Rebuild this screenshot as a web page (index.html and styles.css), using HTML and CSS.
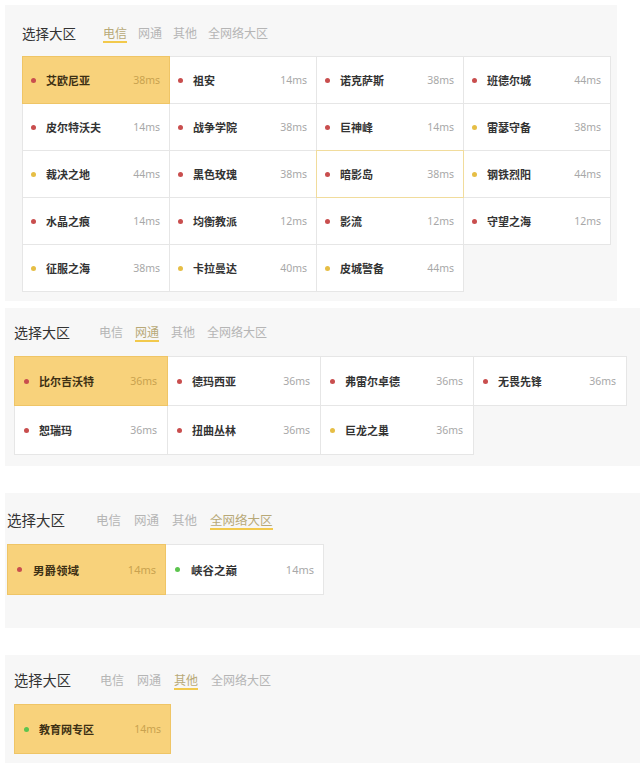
FILE: index.html
```html
<!DOCTYPE html>
<html lang="zh-CN">
<head>
<meta charset="utf-8">
<title>选择大区</title>
<link rel="stylesheet" href="styles.css">
</head>
<body>

<section class="panel p1">
  <div class="head">
    <span class="title">选择大区</span>
    <nav class="tabs">
      <span class="tab active">电信</span>
      <span class="tab">网通</span>
      <span class="tab">其他</span>
      <span class="tab">全网络大区</span>
    </nav>
  </div>
  <div class="grid">
    <div class="cell active"><i class="dot red"></i><span class="name">艾欧尼亚</span><span class="ms">38ms</span></div>
    <div class="cell"><i class="dot red"></i><span class="name">祖安</span><span class="ms">14ms</span></div>
    <div class="cell"><i class="dot red"></i><span class="name">诺克萨斯</span><span class="ms">38ms</span></div>
    <div class="cell"><i class="dot red"></i><span class="name">班德尔城</span><span class="ms">44ms</span></div>
    <div class="cell"><i class="dot red"></i><span class="name">皮尔特沃夫</span><span class="ms">14ms</span></div>
    <div class="cell"><i class="dot red"></i><span class="name">战争学院</span><span class="ms">38ms</span></div>
    <div class="cell"><i class="dot red"></i><span class="name">巨神峰</span><span class="ms">14ms</span></div>
    <div class="cell"><i class="dot yellow"></i><span class="name">雷瑟守备</span><span class="ms">38ms</span></div>
    <div class="cell"><i class="dot yellow"></i><span class="name">裁决之地</span><span class="ms">44ms</span></div>
    <div class="cell"><i class="dot red"></i><span class="name">黑色玫瑰</span><span class="ms">38ms</span></div>
    <div class="cell hover"><i class="dot red"></i><span class="name">暗影岛</span><span class="ms">38ms</span></div>
    <div class="cell"><i class="dot yellow"></i><span class="name">钢铁烈阳</span><span class="ms">44ms</span></div>
    <div class="cell"><i class="dot red"></i><span class="name">水晶之痕</span><span class="ms">14ms</span></div>
    <div class="cell"><i class="dot red"></i><span class="name">均衡教派</span><span class="ms">12ms</span></div>
    <div class="cell"><i class="dot red"></i><span class="name">影流</span><span class="ms">12ms</span></div>
    <div class="cell"><i class="dot red"></i><span class="name">守望之海</span><span class="ms">12ms</span></div>
    <div class="cell"><i class="dot yellow"></i><span class="name">征服之海</span><span class="ms">38ms</span></div>
    <div class="cell"><i class="dot yellow"></i><span class="name">卡拉曼达</span><span class="ms">40ms</span></div>
    <div class="cell"><i class="dot yellow"></i><span class="name">皮城警备</span><span class="ms">44ms</span></div>
  </div>
</section>

<section class="panel p2">
  <div class="head">
    <span class="title">选择大区</span>
    <nav class="tabs">
      <span class="tab">电信</span>
      <span class="tab active">网通</span>
      <span class="tab">其他</span>
      <span class="tab">全网络大区</span>
    </nav>
  </div>
  <div class="grid">
    <div class="cell active"><i class="dot red"></i><span class="name">比尔吉沃特</span><span class="ms">36ms</span></div>
    <div class="cell"><i class="dot red"></i><span class="name">德玛西亚</span><span class="ms">36ms</span></div>
    <div class="cell"><i class="dot red"></i><span class="name">弗雷尔卓德</span><span class="ms">36ms</span></div>
    <div class="cell"><i class="dot red"></i><span class="name">无畏先锋</span><span class="ms">36ms</span></div>
    <div class="cell"><i class="dot red"></i><span class="name">恕瑞玛</span><span class="ms">36ms</span></div>
    <div class="cell"><i class="dot red"></i><span class="name">扭曲丛林</span><span class="ms">36ms</span></div>
    <div class="cell"><i class="dot yellow"></i><span class="name">巨龙之巢</span><span class="ms">36ms</span></div>
  </div>
</section>

<section class="panel p3">
  <div class="head">
    <span class="title">选择大区</span>
    <nav class="tabs">
      <span class="tab">电信</span>
      <span class="tab">网通</span>
      <span class="tab">其他</span>
      <span class="tab active">全网络大区</span>
    </nav>
  </div>
  <div class="grid">
    <div class="cell active"><i class="dot red"></i><span class="name">男爵领域</span><span class="ms">14ms</span></div>
    <div class="cell"><i class="dot green"></i><span class="name">峡谷之巅</span><span class="ms">14ms</span></div>
  </div>
</section>

<section class="panel p4">
  <div class="head">
    <span class="title">选择大区</span>
    <nav class="tabs">
      <span class="tab">电信</span>
      <span class="tab">网通</span>
      <span class="tab active">其他</span>
      <span class="tab">全网络大区</span>
    </nav>
  </div>
  <div class="grid">
    <div class="cell active"><i class="dot green"></i><span class="name">教育网专区</span><span class="ms">14ms</span></div>
  </div>
</section>

</body>
</html>
```

FILE: styles.css
```css
html, body {
  margin: 0;
  padding: 0;
  background: #ffffff;
}
body {
  width: 640px;
  height: 763px;
  overflow: hidden;
  font-family: "Noto Sans", "Noto Sans CJK SC", sans-serif;
  color: #333;
}

.panel {
  background: #f7f7f7;
  box-sizing: border-box;
  margin-left: 5px;
}

.head {
  display: flex;
  align-items: center;
  height: 20px;
}
.title {
  font-family: "Noto Sans CJK SC", sans-serif;
  font-size: 14px;
  line-height: 20px;
  color: #333;
}
.tabs {
  display: flex;
  gap: 12px;
  margin-left: 29px;
}
.tab {
  display: block;
  font-family: "Noto Sans CJK SC", sans-serif;
  font-size: 12px;
  line-height: 14px;
  padding: 3px 0 1px;
  border-bottom: 2px solid transparent;
  color: #b5b5b5;
}
.tab.active {
  color: #b8a978;
  border-bottom-color: #f2c94c;
}

.grid {
  display: grid;
  margin-top: 13px;
}

.cell {
  display: flex;
  align-items: center;
  background: #ffffff;
  border: 1px solid #e6e6e6;
  margin: 0 -1px -1px 0;
  padding: 0 9px 0 8px;
}
.cell.active {
  background: #f8d27b;
  border-color: #efc566;
  position: relative;
  z-index: 2;
}
.cell.hover {
  border-color: #f1dc9c;
  position: relative;
  z-index: 1;
}

.dot {
  display: block;
  width: 5px;
  height: 5px;
  border-radius: 50%;
  flex: none;
}
.dot.red { background: #c94e4e; }
.dot.yellow { background: #e6be45; }
.dot.green { background: #5cc44e; }

.name {
  font-family: "Noto Sans CJK SC", sans-serif;
  font-size: 11px;
  font-weight: 700;
  color: #333;
  margin-left: 10px;
  flex: 1;
}
.cell.active .name { color: #3d3014; }

.ms {
  font-family: "Noto Sans", sans-serif;
  font-size: 10.5px;
  color: #a8a8a8;
}
.cell.active .ms { color: #c9a24f; }

/* panel 1 */
.p1 {
  margin-top: 5px;
  width: 612px;
  padding: 18px 0 10px 17px;
}
.p1 .title { font-size: 13.5px; }
.p1 .tabs { margin-left: 27px; gap: 11px; }
.p1 .grid {
  grid-template-columns: repeat(4, 147px);
  grid-auto-rows: 47px;
}

/* panel 2 */
.p2 {
  margin-top: 7px;
  width: 635px;
  padding: 14px 0 12px 9px;
}
.p2 .grid {
  margin-top: 14px;
  grid-template-columns: repeat(4, 153px);
  grid-auto-rows: 49px;
}
.p2 .cell { padding: 0 10px 0 9px; }

/* panel 3 */
.p3 {
  margin-top: 27px;
  width: 635px;
  padding: 17px 0 34px 2px;
}
.p3 .title { font-size: 14.5px; }
.p3 .tabs { margin-left: 31px; gap: 13px; }
.p3 .tab { font-size: 12.5px; }
.p3 .grid {
  margin-top: 14px;
  grid-template-columns: repeat(4, 158px);
  grid-auto-rows: 50px;
}
.p3 .cell { padding: 0 9px 0 9px; }
.p3 .name { font-size: 11.5px; margin-left: 11px; }
.p3 .ms { font-size: 11px; }

/* panel 4 */
.p4 {
  margin-top: 27px;
  width: 635px;
  padding: 15px 0 10px 9px;
}
.p4 .title { font-size: 14.25px; }
.p4 .tabs { gap: 13px; }
.p4 .grid {
  margin-top: 14px;
  grid-template-columns: repeat(4, 156px);
  grid-auto-rows: 49px;
}
.p4 .cell { padding: 0 9px 0 9px; }
.p4 .name { margin-left: 10px; }
```
